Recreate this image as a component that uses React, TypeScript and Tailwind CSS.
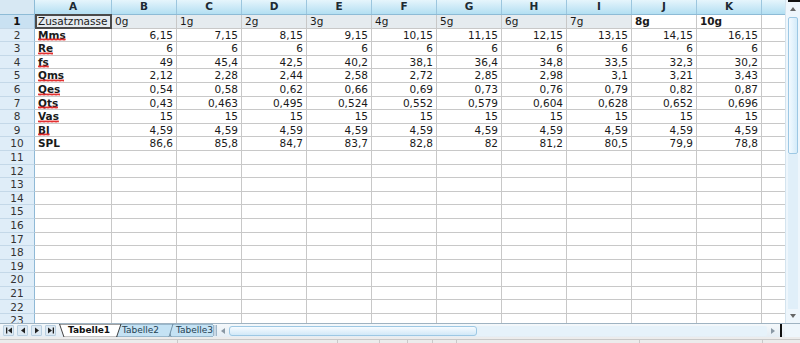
import type { ReactNode } from "react";

type DataRow = {
  label: string;
  squiggle?: boolean;
  values: string[];
};

const columns = ["A", "B", "C", "D", "E", "F", "G", "H", "I", "J", "K"];

const masses = ["0g", "1g", "2g", "3g", "4g", "5g", "6g", "7g", "8g", "10g"];

const rows: DataRow[] = [
  { label: "Mms", squiggle: true, values: ["6,15", "7,15", "8,15", "9,15", "10,15", "11,15", "12,15", "13,15", "14,15", "16,15"] },
  { label: "Re", squiggle: true, values: ["6", "6", "6", "6", "6", "6", "6", "6", "6", "6"] },
  { label: "fs", squiggle: true, values: ["49", "45,4", "42,5", "40,2", "38,1", "36,4", "34,8", "33,5", "32,3", "30,2"] },
  { label: "Qms", squiggle: true, values: ["2,12", "2,28", "2,44", "2,58", "2,72", "2,85", "2,98", "3,1", "3,21", "3,43"] },
  { label: "Qes", squiggle: true, values: ["0,54", "0,58", "0,62", "0,66", "0,69", "0,73", "0,76", "0,79", "0,82", "0,87"] },
  { label: "Qts", squiggle: true, values: ["0,43", "0,463", "0,495", "0,524", "0,552", "0,579", "0,604", "0,628", "0,652", "0,696"] },
  { label: "Vas", squiggle: true, values: ["15", "15", "15", "15", "15", "15", "15", "15", "15", "15"] },
  { label: "Bl", squiggle: true, values: ["4,59", "4,59", "4,59", "4,59", "4,59", "4,59", "4,59", "4,59", "4,59", "4,59"] },
  { label: "SPL", values: ["86,6", "85,8", "84,7", "83,7", "82,8", "82", "81,2", "80,5", "79,9", "78,8"] },
];

const emptyRows = Array.from({ length: 13 }, (_, i) => i + 11);

function RowHead({ n, active }: { n: number; active?: boolean }) {
  return (
    <div
      className={
        "w-[35px] shrink-0 flex items-center justify-center border-r border-b border-r-[#8fb9d6] border-b-[#c4d8e8] text-[10.5px] " +
        (active ? "bg-[#c9e1f2] font-bold text-[#111]" : "bg-[#dfedf8] text-[#333]")
      }
    >
      {n}
    </div>
  );
}

function Cell({
  wide,
  children,
  right,
  bg,
  bold,
}: {
  wide?: boolean;
  children?: ReactNode;
  right?: boolean;
  bg?: boolean;
  bold?: boolean;
}) {
  return (
    <div
      className={
        (wide ? "w-[77px] " : "w-[65px] ") +
        "shrink-0 flex items-center px-[3px] border-r border-b border-[#c8c8c8] whitespace-nowrap " +
        (right ? "justify-end " : "justify-start ") +
        (bg ? "bg-[#e5ebef] " : "bg-white ") +
        (bold ? "font-bold" : "")
      }
    >
      {children}
    </div>
  );
}

// spell-check squiggle under a word
function Squiggle({ children }: { children: ReactNode }) {
  return (
    <span className="relative inline-block">
      {children}
      <svg className="absolute left-0 top-full -mt-[2px] w-full h-[3px]" height="3">
        <defs>
          <pattern id="wave" width="4" height="3" patternUnits="userSpaceOnUse">
            <path d="M0 2.5 L1 0.5 L2 2.5 L3 0.5 L4 2.5" fill="none" stroke="#e01818" strokeWidth="0.9" />
          </pattern>
        </defs>
        <rect width="100%" height="3" fill="url(#wave)" />
      </svg>
    </span>
  );
}

function Rest() {
  return <div className="flex-1 border-b border-[#c8c8c8] bg-white" />;
}

function NavButton({ kind }: { kind: "first" | "prev" | "next" | "last" }) {
  return (
    <div className="w-[11px] h-[11px] flex items-center justify-center bg-[#dde9f3] border border-[#b9cfe0] rounded-[1px]">
      <svg width="8" height="7" viewBox="0 0 8 7">
        {kind === "first" && (
          <>
            <rect x="1" y="0.5" width="1.3" height="6" fill="#222" />
            <path d="M7 0.5 L3 3.5 L7 6.5 Z" fill="#222" />
          </>
        )}
        {kind === "prev" && <path d="M6 0.5 L2 3.5 L6 6.5 Z" fill="#222" />}
        {kind === "next" && <path d="M2 0.5 L6 3.5 L2 6.5 Z" fill="#222" />}
        {kind === "last" && (
          <>
            <path d="M1 0.5 L5 3.5 L1 6.5 Z" fill="#222" />
            <rect x="5.7" y="0.5" width="1.3" height="6" fill="#222" />
          </>
        )}
      </svg>
    </div>
  );
}

function SheetTabs() {
  return (
    <div className="relative w-[154px] h-full overflow-hidden">
      <svg className="absolute inset-0" width="154" height="14" viewBox="0 0 154 14">
        <path d="M108 0 L160 0 L156 13 L112 13 Z" fill="#c4e2f4" stroke="#5c7c93" strokeWidth="0.8" />
        <path d="M54 0 L114 0 L110 13 L58 13 Z" fill="#c4e2f4" stroke="#5c7c93" strokeWidth="0.8" />
        <path d="M0.5 0 L62 0 L57.5 13.2 L5 13.2 Z" fill="#ffffff" stroke="#2e2e2e" strokeWidth="0.9" />
      </svg>
      <div className="relative flex h-full items-center text-[9px] whitespace-nowrap">
        <span className="pl-[9px] w-[63px] font-bold text-[#111]">Tabelle1</span>
        <span className="w-[54px] text-[#243f52]">Tabelle2</span>
        <span className="text-[#243f52]">Tabelle3</span>
      </div>
    </div>
  );
}

function VScroll() {
  return (
    <div className="w-[15px] shrink-0 h-full flex flex-col bg-[#eef6fc] border-l border-[#d4e4ef]">
      <div className="h-[2px] ml-[2px] bg-[#111]" />
      <div className="h-[14px] flex items-center justify-center">
        <svg width="6" height="4" viewBox="0 0 6 4">
          <path d="M0 4 L3 0 L6 4 Z" fill="#666" />
        </svg>
      </div>
      <div className="flex-1 flex flex-col px-[2px]">
        <div className="h-[137px] mt-[1px] rounded-[2px] border border-[#9dc8e4] bg-gradient-to-r from-[#f3faff] to-[#d4ebf9]" />
        <div className="flex-1 bg-[#e0eff9]" />
      </div>
      <div className="h-[14px] flex items-center justify-center">
        <svg width="6" height="4" viewBox="0 0 6 4">
          <path d="M0 0 L3 4 L6 0 Z" fill="#666" />
        </svg>
      </div>
    </div>
  );
}

export default function App() {
  return (
    <div className="w-[800px] h-[343px] overflow-hidden bg-white flex flex-col font-['DejaVu_Sans',sans-serif] text-[10.5px] text-[#1a1a1a] select-none">
      <div className="flex h-[323px] shrink-0">
        <div className="flex-1 flex flex-col overflow-hidden">
          {/* column headers */}
          <div className="flex h-[15px] shrink-0 bg-gradient-to-b from-[#e6f5fc] to-[#b3dff2] border-b border-[#8dbbd6]">
            <div className="w-[35px] shrink-0 border-r border-[#8dbbd6] bg-[#d7e8f3]" />
            {columns.map((c) => (
              <div
                key={c}
                className={
                  (c === "A" ? "w-[77px]" : "w-[65px]") +
                  " shrink-0 flex items-center justify-center font-bold text-[10.5px] text-[#1d2a33] border-r border-[#9cc6de]"
                }
              >
                {c}
              </div>
            ))}
            <div className="flex-1" />
          </div>

          {/* row 1 */}
          <div className="flex h-[13.6px] shrink-0 leading-none">
            <RowHead n={1} active />
            <div className="w-[77px] shrink-0 flex items-center px-px bg-[#e5ebef] border-2 border-[#4a4a4a] -mt-px whitespace-nowrap overflow-hidden">
              Zusatzmasse
            </div>
            {masses.map((m, i) => (
              <Cell key={m} bg={i < 8} bold={i >= 8}>
                {m}
              </Cell>
            ))}
            <Rest />
          </div>

          {/* data rows */}
          {rows.map((r, idx) => (
            <div key={r.label} className="flex h-[13.6px] shrink-0 leading-none">
              <RowHead n={idx + 2} />
              <Cell wide bold>
                {r.squiggle ? <Squiggle>{r.label}</Squiggle> : r.label}
              </Cell>
              {r.values.map((v, i) => (
                <Cell key={i} right>
                  {v}
                </Cell>
              ))}
              <Rest />
            </div>
          ))}

          {/* empty rows */}
          {emptyRows.map((n) => (
            <div key={n} className="flex h-[13.6px] shrink-0 leading-none">
              <RowHead n={n} />
              <Cell wide />
              {masses.map((m) => (
                <Cell key={m} />
              ))}
              <Rest />
            </div>
          ))}
        </div>
        <VScroll />
      </div>

      {/* sheet tab bar */}
      <div className="flex h-[14px] shrink-0 items-stretch bg-gradient-to-b from-[#f4f8fb] to-[#e4edf4] border-t border-[#9fb3c2]">
        <div className="flex items-center gap-[3px] pl-[3px] pr-[3px]">
          <NavButton kind="first" />
          <NavButton kind="prev" />
          <NavButton kind="next" />
          <NavButton kind="last" />
        </div>
        <SheetTabs />
        <div className="w-[4px] my-[1px] bg-[#c9d9e6] border-x border-[#9fb6c8]" />
        <div className="flex-1 flex items-center pl-[4px] pr-[3px]">
          <svg width="4" height="6" viewBox="0 0 4 6" className="shrink-0">
            <path d="M4 0 L0 3 L4 6 Z" fill="#8a98a4" />
          </svg>
          <div className="flex-1 h-[10px] ml-[4px] mr-[4px] flex bg-[#e6f2fa] rounded-[2px]">
            <div className="w-[248px] h-full rounded-[3px] border border-[#9dc8e4] bg-gradient-to-b from-[#f6fbff] to-[#d2e9f8]" />
          </div>
          <svg width="4" height="6" viewBox="0 0 4 6" className="shrink-0">
            <path d="M0 0 L4 3 L0 6 Z" fill="#8a98a4" />
          </svg>
          <div className="w-[2px] h-[14px] ml-[5px] bg-[#111]" />
        </div>
        <div className="w-[15px] bg-[#eef6fc]" />
      </div>

      {/* status bar */}
      <div className="flex-1 flex bg-[#ececec] pt-[2px]">
        <div className="w-[178px] border-t border-r border-[#c9c9c9]" />
        <div className="w-[160px] border-t border-r border-[#c9c9c9]" />
        <div className="w-[42px] border-t border-r border-[#c9c9c9]" />
        <div className="w-[28px] border-t border-r border-[#c9c9c9]" />
        <div className="w-[25px] border-t border-r border-[#c9c9c9]" />
        <div className="w-[24px] border-t border-r border-[#c9c9c9]" />
        <div className="w-[183px] border-t border-r border-[#c9c9c9]" />
        <div className="w-[123px] border-t border-r border-[#c9c9c9]" />
        <div className="flex-1 border-t border-[#c9c9c9]" />
      </div>
    </div>
  );
}
